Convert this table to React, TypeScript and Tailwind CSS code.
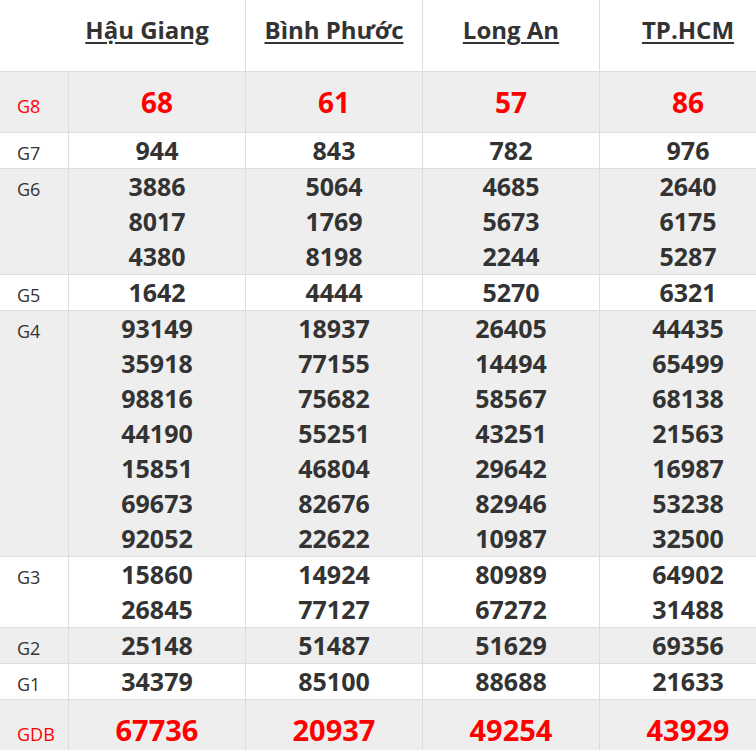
import React from "react";

type Row = { label: string; special?: boolean; values: string[][] };

const rows: Row[] = [
  { label: "G8", special: true, values: [["68"], ["61"], ["57"], ["86"]] },
  { label: "G7", values: [["944"], ["843"], ["782"], ["976"]] },
  {
    label: "G6",
    values: [
      ["3886", "8017", "4380"],
      ["5064", "1769", "8198"],
      ["4685", "5673", "2244"],
      ["2640", "6175", "5287"],
    ],
  },
  { label: "G5", values: [["1642"], ["4444"], ["5270"], ["6321"]] },
  {
    label: "G4",
    values: [
      ["93149", "35918", "98816", "44190", "15851", "69673", "92052"],
      ["18937", "77155", "75682", "55251", "46804", "82676", "22622"],
      ["26405", "14494", "58567", "43251", "29642", "82946", "10987"],
      ["44435", "65499", "68138", "21563", "16987", "53238", "32500"],
    ],
  },
  {
    label: "G3",
    values: [
      ["15860", "26845"],
      ["14924", "77127"],
      ["80989", "67272"],
      ["64902", "31488"],
    ],
  },
  { label: "G2", values: [["25148"], ["51487"], ["51629"], ["69356"]] },
  { label: "G1", values: [["34379"], ["85100"], ["88688"], ["21633"]] },
  { label: "GDB", special: true, values: [["67736"], ["20937"], ["49254"], ["43929"]] },
];

const provinces = ["Hậu Giang", "Bình Phước", "Long An", "TP.HCM"];

export default function App() {
  return (
    <div
      className="w-[756px] h-[750px] overflow-hidden bg-white"
      style={{ fontFamily: '"Open Sans", "Noto Sans", sans-serif' }}
    >
      <table className="w-[776px] table-fixed border-separate border-spacing-0">
        <colgroup>
          <col className="w-[68px]" />
          <col className="w-[177px]" />
          <col className="w-[177px]" />
          <col className="w-[177px]" />
          <col className="w-[177px]" />
        </colgroup>
        <thead>
          <tr>
            <th className="h-[72px] border-b border-[#ddd] p-0"></th>
            {provinces.map((p, i) => (
              <th
                key={p}
                className={`h-[72px] border-b border-[#ddd] p-0 pt-[15px] align-top text-center text-[24px] leading-[30px] font-bold text-[#333] ${
                  i === 0 ? "pr-[19px]" : "border-l"
                }`}
              >
                <span className="underline decoration-2 underline-offset-[3px]">{p}</span>
              </th>
            ))}
          </tr>
        </thead>
        <tbody>
          {rows.map((r, ri) => {
            const bg = ri % 2 === 0 ? "bg-[#eeeeee]" : "bg-white";
            return (
              <tr key={r.label} className={bg}>
                <td
                  className={`align-baseline border-b border-[#ddd] p-0 pl-[17px] text-[18px] leading-[24px] ${
                    r.special ? "text-[#f00]" : "text-[#333]"
                  }`}
                >
                  {r.label}
                </td>
                {r.values.map((vals, ci) => (
                  <td
                    key={ci}
                    className={`align-baseline border-b border-l border-[#ddd] p-0 text-center font-bold ${
                      r.special
                        ? `text-[#f00] leading-[60px] ${r.label === "GDB" ? "text-[29px]" : "text-[28px]"}`
                        : "text-[#333] text-[25px] leading-[35px]"
                    }`}
                  >
                    {vals.map((v) => (
                      <div key={v}>{v}</div>
                    ))}
                  </td>
                ))}
              </tr>
            );
          })}
        </tbody>
      </table>
    </div>
  );
}
